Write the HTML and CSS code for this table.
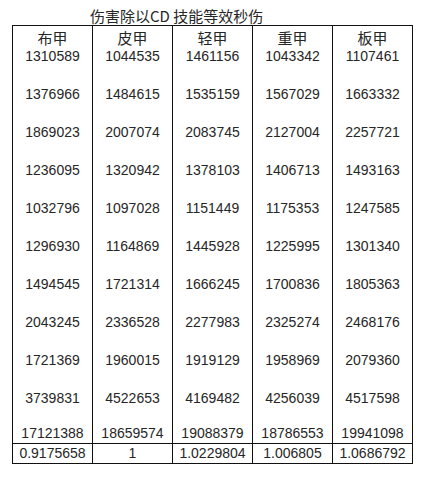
FILE: index.html
```html
<!DOCTYPE html>
<html lang="zh">
<head>
<meta charset="utf-8">
<link rel="stylesheet" href="styles.css">
</head>
<body>
<div class="title">伤害除以CD 技能等效秒伤</div>
<table class="sheet">
  <colgroup><col><col><col><col><col></colgroup>
  <thead>
    <tr class="head"><th>布甲</th><th>皮甲</th><th>轻甲</th><th>重甲</th><th>板甲</th></tr>
  </thead>
  <tbody>
    <tr class="first"><td>1310589</td><td>1044535</td><td>1461156</td><td>1043342</td><td>1107461</td></tr>
    <tr class="row"><td>1376966</td><td>1484615</td><td>1535159</td><td>1567029</td><td>1663332</td></tr>
    <tr class="row"><td>1869023</td><td>2007074</td><td>2083745</td><td>2127004</td><td>2257721</td></tr>
    <tr class="row"><td>1236095</td><td>1320942</td><td>1378103</td><td>1406713</td><td>1493163</td></tr>
    <tr class="row"><td>1032796</td><td>1097028</td><td>1151449</td><td>1175353</td><td>1247585</td></tr>
    <tr class="row"><td>1296930</td><td>1164869</td><td>1445928</td><td>1225995</td><td>1301340</td></tr>
    <tr class="row"><td>1494545</td><td>1721314</td><td>1666245</td><td>1700836</td><td>1805363</td></tr>
    <tr class="row"><td>2043245</td><td>2336528</td><td>2277983</td><td>2325274</td><td>2468176</td></tr>
    <tr class="row"><td>1721369</td><td>1960015</td><td>1919129</td><td>1958969</td><td>2079360</td></tr>
    <tr class="row"><td>3739831</td><td>4522653</td><td>4169482</td><td>4256039</td><td>4517598</td></tr>
    <tr class="row total"><td>17121388</td><td>18659574</td><td>19088379</td><td>18786553</td><td>19941098</td></tr>
    <tr class="ratio"><td>0.9175658</td><td>1</td><td>1.0229804</td><td>1.006805</td><td>1.0686792</td></tr>
  </tbody>
</table>
</body>
</html>
```

FILE: styles.css
```css
html, body {
  margin: 0;
  padding: 0;
  background: #ffffff;
}
body {
  font-family: "Liberation Sans", "Noto Sans CJK SC", sans-serif;
  color: #262626;
}
.title {
  padding: 7px 0 0 90px;
  height: 18px;
  font-size: 15px;
  line-height: 18px;
  font-family: "Noto Sans CJK SC", sans-serif;
}
.sheet {
  margin-left: 12px;
  border-collapse: collapse;
  table-layout: fixed;
  width: 401px;
  border: 1px solid #111;
}
.sheet col {
  width: 80px;
}
.sheet th, .sheet td {
  border-left: 1px solid #111;
  border-right: 1px solid #111;
  padding: 0;
  text-align: center;
  font-size: 14px;
  line-height: 19px;
  font-weight: normal;
  vertical-align: bottom;
}
.sheet th {
  font-family: "Noto Sans CJK SC", sans-serif;
  font-size: 15px;
  height: 21px;
}
.first td {
  height: 19px;
}
.row td {
  height: 38px;
}
.row.total td {
  height: 35px;
}
.ratio td {
  border-top: 1px solid #111;
  height: 18px;
}
```
